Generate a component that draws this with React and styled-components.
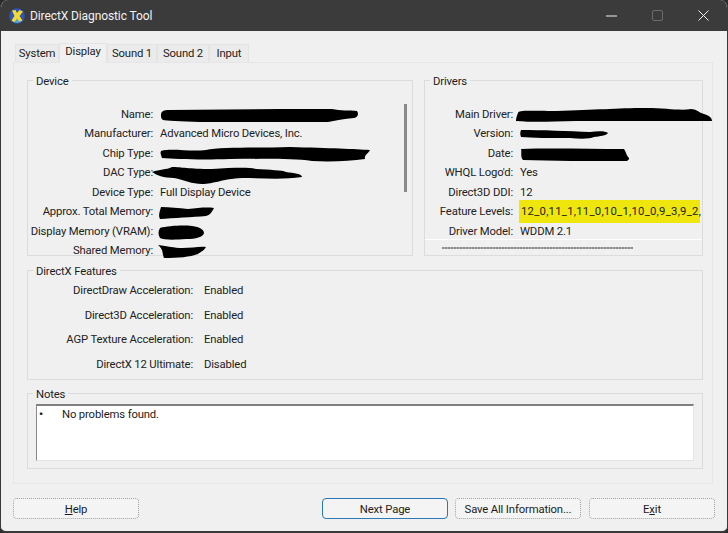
import styled, { createGlobalStyle } from "styled-components";

const GlobalStyle = createGlobalStyle`
  html, body {
    margin: 0;
    padding: 0;
    background: #2b2b2b;
  }
  body {
    font-family: Roboto, "Open Sans", sans-serif;
    font-size: 11.3px;
    letter-spacing: -0.15px;
    color: #1c1c1c;
  }
`;

const Win = styled.div`
  width: 728px;
  height: 533px;
  box-sizing: border-box;
  display: flex;
  flex-direction: column;
  background: #f0f0f0;
  border-radius: 8px 8px 6px 6px;
  border-left: 1px solid #3a3a3a;
  border-right: 1px solid #3a3a3a;
  border-bottom: 2px solid #3a3a3a;
  overflow: hidden;
`;

const TitleBar = styled.div`
  height: 31px;
  flex: none;
  background: #3b3b3b;
  display: flex;
  align-items: center;
  color: #f2f2f2;
  font-size: 12px;
  letter-spacing: -0.1px;
  padding-left: 8px;
`;

const TitleText = styled.span`
  margin-left: 5px;
  flex: 1;
`;

const WinButton = styled.div`
  width: 46px;
  margin-right: ${(p) => p.$mr || 0}px;
  display: flex;
  justify-content: center;
  align-items: center;
  height: 31px;
`;

const Content = styled.div`
  flex: 1;
  display: flex;
  flex-direction: column;
  padding: 12px 12px 0 12px;
`;

const Tabs = styled.div`
  display: flex;
  height: 19px;
  align-items: flex-end;
  padding-left: 2px;
  position: relative;
  z-index: 1;
`;

const Tab = styled.div`
  height: ${(p) => (p.$active ? 20 : 18)}px;
  width: ${(p) => p.$w}px;
  box-sizing: border-box;
  display: flex;
  justify-content: center;
  padding-top: ${(p) => (p.$active ? 0 : 1)}px;
  margin-bottom: ${(p) => (p.$active ? -1 : 0)}px;
  background: ${(p) => (p.$active ? "#f0f0f0" : "#ebebeb")};
  border: 1px solid #e4e4e4;
  border-bottom: none;
  line-height: 16px;
`;

const Panel = styled.div`
  height: 422px;
  width: 700px;
  box-sizing: border-box;
  border: 1px solid #e6e6e6;
  padding: 17px 9px 0 13px;
  display: flex;
  flex-direction: column;
`;

const TopRow = styled.div`
  display: flex;
  gap: 11px;
  height: 176px;
`;

const Group = styled.div`
  position: relative;
  box-sizing: border-box;
  border: 1px solid #dcdcdc;
  width: ${(p) => (p.$w ? `${p.$w}px` : "100%")};
  height: ${(p) => p.$h}px;
  margin-top: ${(p) => p.$mt || 0}px;
`;

const Legend = styled.span`
  position: absolute;
  top: -7px;
  left: 5px;
  padding: 0 3px;
  background: #f0f0f0;
  line-height: 15px;
`;

const Rows = styled.div`
  padding-top: ${(p) => p.$pt}px;
  display: flex;
  flex-direction: column;
`;

const Row = styled.div`
  display: flex;
  height: ${(p) => p.$h || 19.5}px;
  line-height: ${(p) => p.$h || 19.5}px;
  white-space: nowrap;
`;

const Label = styled.div`
  width: ${(p) => p.$w}px;
  flex: none;
  text-align: right;
  color: #222;
`;

const Value = styled.div`
  position: relative;
  margin-left: ${(p) => p.$ml || 7}px;
`;

const Highlight = styled.span`
  display: inline-block;
  background: #eee60c;
  width: 181px;
  height: 23px;
  line-height: 23px;
  margin: -2px 0 0 -1px;
  padding-left: 2px;
  box-sizing: border-box;
  letter-spacing: 0.25px;
`;

const Blot = styled.svg`
  position: absolute;
  left: ${(p) => p.$x}px;
  top: ${(p) => p.$y + 10}px;
  overflow: visible;
`;

const Scrollbar = styled.div`
  position: absolute;
  left: 376px;
  top: 23px;
  width: 3px;
  height: 88px;
  background: #8a8a8a;
`;

const WhiteLine = styled.div`
  position: absolute;
  left: 0;
  right: 0;
  top: 158px;
  height: 1px;
  background: #fff;
`;

const Squiggle = styled.div`
  position: absolute;
  left: 17px;
  top: 166px;
  width: 191px;
  height: 2px;
  background: repeating-linear-gradient(90deg, #8d8d8d 0 2px, #b0b0b0 2px 3px);
`;

const NotesBox = styled.div`
  margin: 10px 0 0 8px;
  width: 658px;
  height: 57px;
  box-sizing: border-box;
  background: #fff;
  border-top: 2px solid #7f7f7f;
  border-left: 1px solid #8a8a8a;
  border-right: 1px solid #e4e4e4;
  border-bottom: 1px solid #e4e4e4;
  display: flex;
  line-height: 15px;
  padding: 1px 0 0 2px;
`;

const Bullet = styled.span`
  width: 23px;
  flex: none;
  font-weight: 700;
`;

const Footer = styled.div`
  display: flex;
  margin-top: 14px;
  width: 702px;
`;

const Btn = styled.div`
  width: 126px;
  height: 21px;
  box-sizing: border-box;
  display: flex;
  justify-content: center;
  align-items: center;
  padding-top: 1px;
  border: 1px ${(p) => (p.$focus ? "solid #2a78b5" : "dotted #a0a0a0")};
  border-radius: 4px;
  background: #f4f4f4;
  margin-left: ${(p) => p.$ml || 0}px;
`;

const DxIcon = () => (
  <svg width="16" height="16" viewBox="0 0 16 16">
    <circle cx="8" cy="8" r="7.8" fill="#2f55b5" />
    <path d="M2.5 12.5 A7.5 7.5 0 0 0 13.5 12.5 L8 10z" fill="#58a4d8" />
    <path d="M3 2.5 L6.5 2 L8 5 L10.5 2 L14 3.5 L10.5 8 L13.5 12.5 L10.5 13.5 L8 10.5 L5.5 14 L2.5 12.5 L5.5 8z" fill="#f4dc2e" />
  </svg>
);

const Scribble = ({ x, y, w, h, d }) => (
  <Blot $x={x} $y={y} width={w} height={h} viewBox={`0 0 ${w} ${h}`}>
    <path d={d} fill="#000" />
  </Blot>
);

const device = [
  ["Name:", "", { x: 0, y: -7, w: 198, h: 14, d: "M1 7 C1 3 4 2 9 2 L120 1 L172 1 C180 3 190 2 197 3 C199 6 198 9 194 10 C180 11 176 13 168 14 L40 14 C20 13 6 13 3 12 C1 11 1 9 1 7z" }],
  ["Manufacturer:", "Advanced Micro Devices, Inc."],
  ["Chip Type:", "", { x: 0, y: -8, w: 211, h: 16, d: "M1 5 C12 2 30 6 46 4 C60 1 100 2 130 1 C170 2 195 3 210 4 C208 8 204 9 205 13 C190 15 172 16 152 15 C130 12 100 13 70 13 C40 14 15 13 2 12 C1 9 0 7 1 5z" }],
  ["DAC Type:", "", { x: -8, y: -7, w: 150, h: 18, d: "M0 6 C8 3 14 4 20 1 C30 1 36 3 60 3 C80 2 95 1 104 3 C118 4 130 4 134 6 C142 7 150 8 150 11 C130 14 110 12 90 12 C70 13 62 18 50 18 C40 18 32 14 22 12 C12 12 4 9 0 6z" }],
  ["Device Type:", "Full Display Device"],
  ["Approx. Total Memory:", "", { x: -2, y: -6, w: 56, h: 13, d: "M3 1 C12 1 20 2 30 3 C40 2 48 1 56 2 C54 6 52 9 48 10 C35 11 15 12 2 13 C0 9 2 5 3 1z" }],
  ["Display Memory (VRAM):", "", { x: -2, y: -7, w: 46, h: 15, d: "M2 3 C10 1 24 0 34 1 C42 2 46 5 46 8 C45 12 38 14 28 14 C16 15 6 15 2 13 C0 10 0 6 2 3z" }],
  ["Shared Memory:", "", { x: -2, y: -6, w: 49, h: 13, d: "M0 0 C10 1 16 3 24 3 C34 3 42 1 48 2 C46 6 42 7 40 9 C32 12 20 13 6 13 C4 9 6 5 0 0z" }],
];

const drivers = [
  ["Main Driver:", "", { x: -4, y: -8, w: 197, h: 15, d: "M2 6 C3 3 10 4 40 4 C80 3 100 1 130 1 C150 1 165 4 175 2 C180 2 182 5 188 7 C194 9 196 11 196 14 C150 14 100 14 60 14 C30 15 8 15 0 14 C0 11 1 8 2 6z" }],
  ["Version:", "", { x: 0, y: -5, w: 88, h: 11, d: "M1 1 C20 1 50 2 70 3 C78 2 86 2 88 4 C86 7 80 7 74 8 C70 10 60 10 50 9 C30 9 12 9 1 8 C0 6 0 3 1 1z" }],
  ["Date:", "", { x: 0, y: -6, w: 110, h: 13, d: "M1 1 C30 0 70 1 104 1 C106 4 106 6 108 9 C110 10 109 12 107 13 C70 13 30 13 3 12 C0 9 2 4 1 1z" }],
  ["WHQL Logo'd:", "Yes"],
  ["Direct3D DDI:", "12"],
  ["Feature Levels:", <Highlight key="h">12_0,11_1,11_0,10_1,10_0,9_3,9_2,</Highlight>],
  ["Driver Model:", "WDDM 2.1"],
];

const features = [
  ["DirectDraw Acceleration:", "Enabled"],
  ["Direct3D Acceleration:", "Enabled"],
  ["AGP Texture Acceleration:", "Enabled"],
  ["DirectX 12 Ultimate:", "Disabled"],
];

const tabs = [
  ["System", 44],
  ["Display", 48],
  ["Sound 1", 50],
  ["Sound 2", 52],
  ["Input", 40],
];

const App = () => (
  <>
    <GlobalStyle />
    <Win>
      <TitleBar>
        <DxIcon />
        <TitleText>DirectX Diagnostic Tool</TitleText>
        <WinButton>
          <svg width="11" height="2" viewBox="0 0 11 2">
            <path d="M0 1h11" stroke="#f0f0f0" strokeWidth="1" />
          </svg>
        </WinButton>
        <WinButton>
          <svg width="11" height="11" viewBox="0 0 11 11">
            <rect x="0.5" y="0.5" width="10" height="10" rx="1.5" fill="none" stroke="#6c6c6c" />
          </svg>
        </WinButton>
        <WinButton $mr={1}>
          <svg width="11" height="11" viewBox="0 0 11 11">
            <path d="M0.5 0.5L10.5 10.5M10.5 0.5L0.5 10.5" stroke="#f0f0f0" strokeWidth="1" />
          </svg>
        </WinButton>
      </TitleBar>
      <Content>
        <Tabs>
          {tabs.map(([name, w]) => (
            <Tab key={name} $w={w} $active={name === "Display"}>
              {name}
            </Tab>
          ))}
        </Tabs>
        <Panel>
          <TopRow>
            <Group $w={386} $h={176}>
              <Legend>Device</Legend>
              <Rows $pt={23.6}>
                {device.map(([label, value, blot]) => (
                  <Row key={label}>
                    <Label $w={125}>{label}</Label>
                    <Value>
                      {value}
                      {blot && <Scribble {...blot} />}
                    </Value>
                  </Row>
                ))}
              </Rows>
              <Scrollbar />
            </Group>
            <Group $w={279} $h={176}>
              <Legend>Drivers</Legend>
              <Rows $pt={23.6}>
                {drivers.map(([label, value, blot]) => (
                  <Row key={label}>
                    <Label $w={88}>{label}</Label>
                    <Value>
                      {value}
                      {blot && <Scribble {...blot} />}
                    </Value>
                  </Row>
                ))}
              </Rows>
              <WhiteLine />
              <Squiggle />
            </Group>
          </TopRow>
          <Group $h={110} $mt={14}>
            <Legend>DirectX Features</Legend>
            <Rows $pt={8}>
              {features.map(([label, value]) => (
                <Row key={label} $h={24.7}>
                  <Label $w={165}>{label}</Label>
                  <Value $ml={11}>{value}</Value>
                </Row>
              ))}
            </Rows>
          </Group>
          <Group $h={76} $mt={13}>
            <Legend>Notes</Legend>
            <NotesBox>
              <Bullet>•</Bullet>
              No problems found.
            </NotesBox>
          </Group>
        </Panel>
        <Footer>
          <Btn>
            <span>
              <u>H</u>elp
            </span>
          </Btn>
          <Btn $ml={183} $focus>
            Next Page
          </Btn>
          <Btn $ml={7}>Save All Information...</Btn>
          <Btn $ml={8}>
            <span>
              E<u>x</u>it
            </span>
          </Btn>
        </Footer>
      </Content>
    </Win>
  </>
);

export default App;
